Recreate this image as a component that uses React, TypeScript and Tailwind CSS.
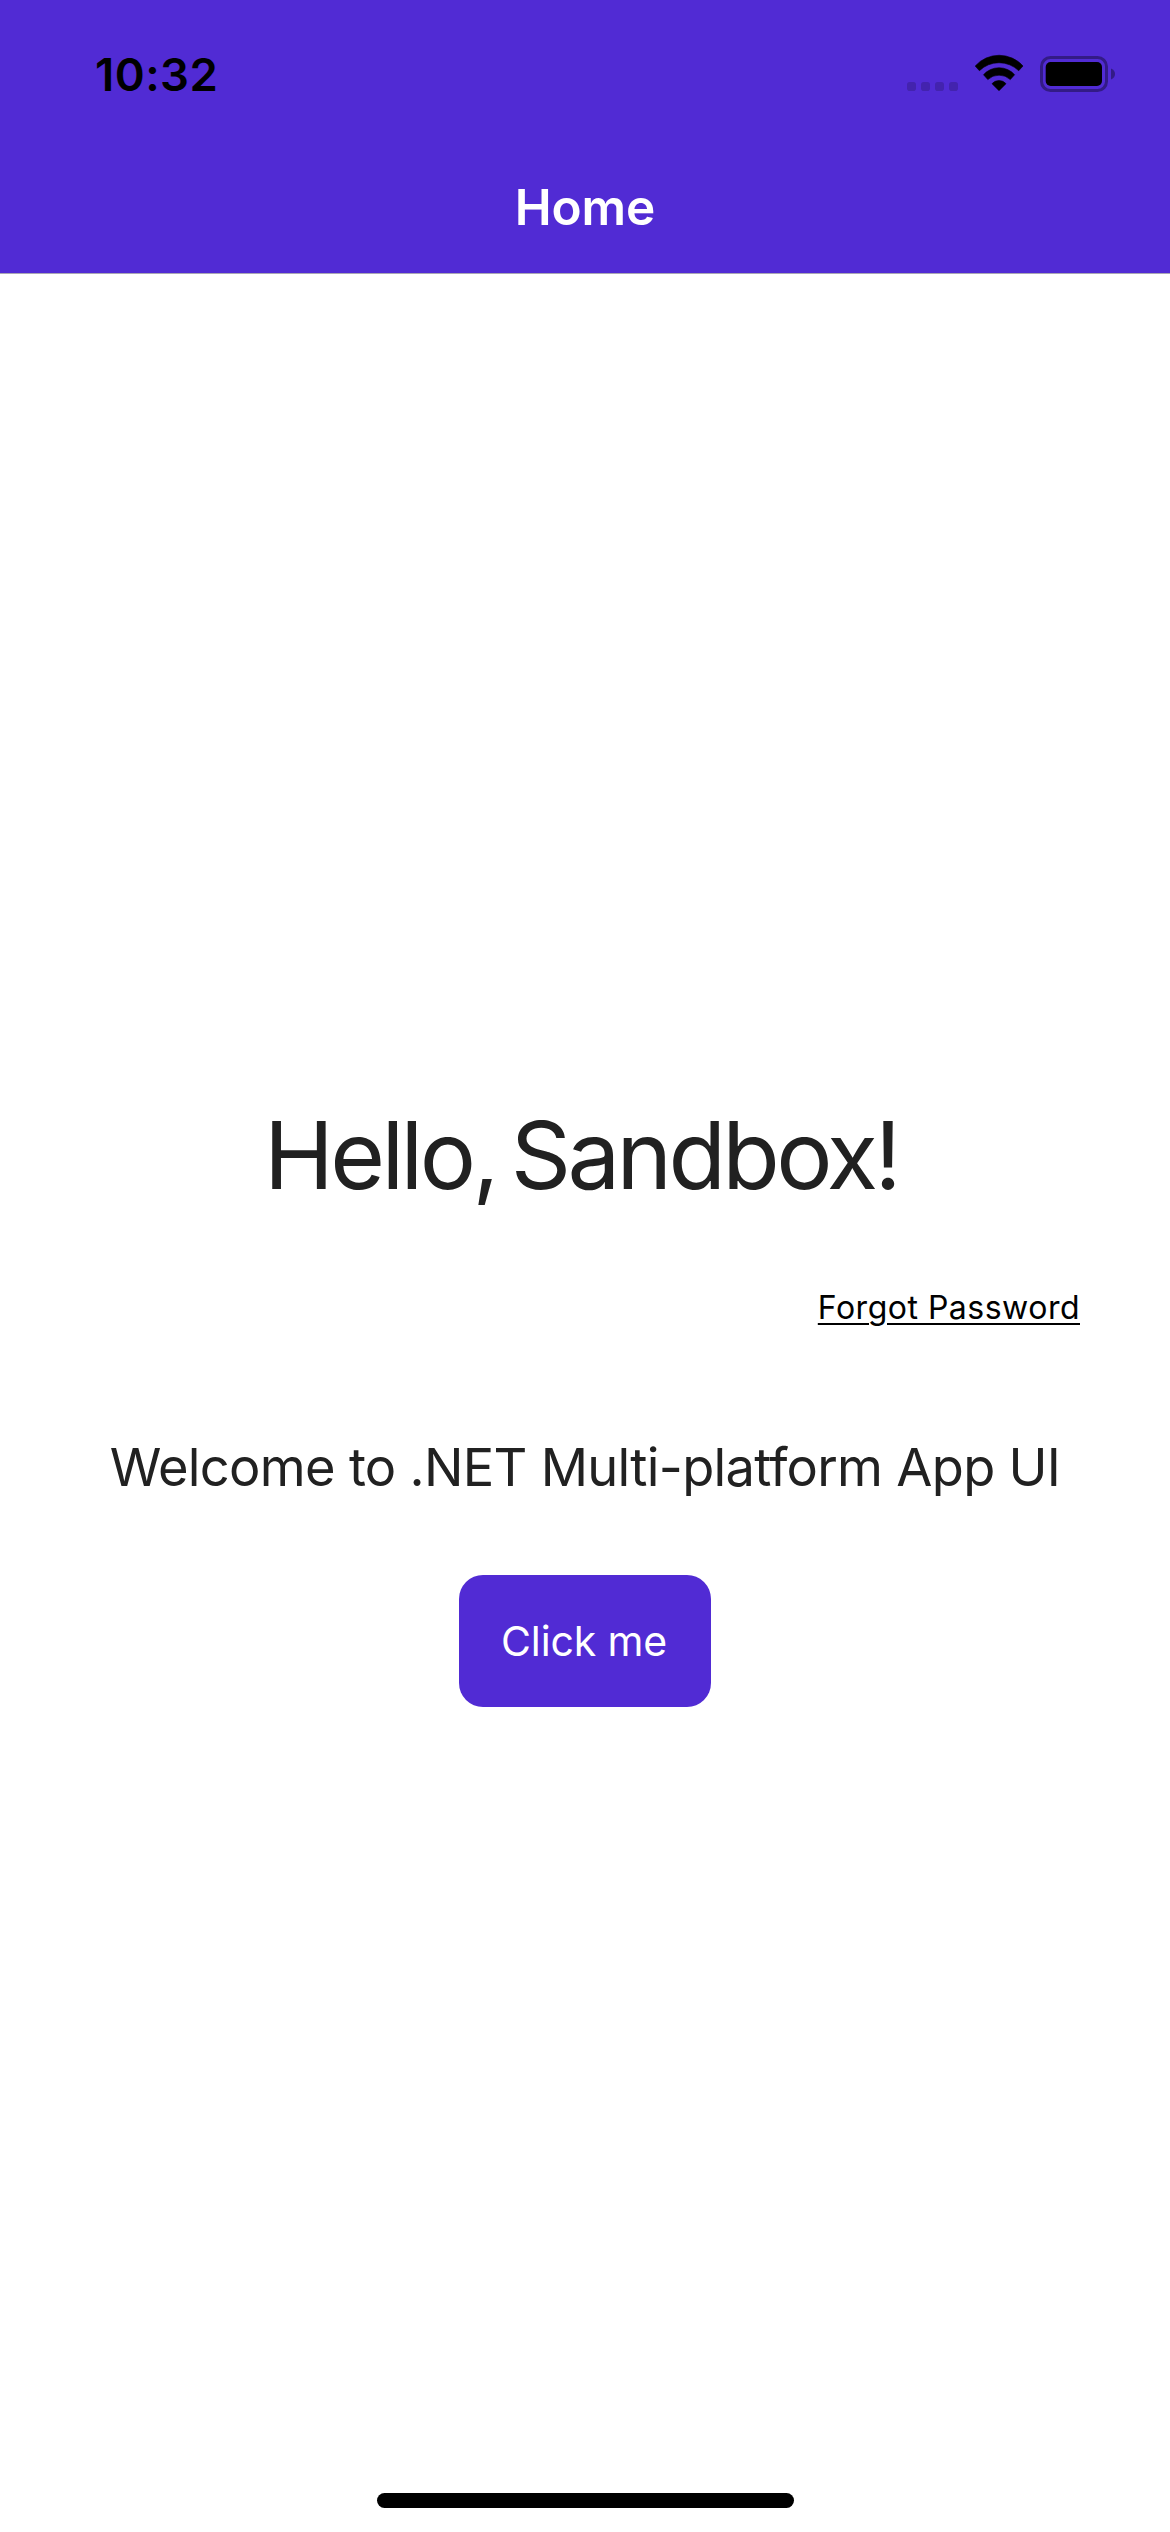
function StatusIcons() {
  return (
    <svg width="210" height="60" viewBox="905 44 210 60">
      <g fill="#4323ae">
        <rect x="907" y="82" width="9" height="9" rx="2.8" />
        <rect x="921" y="82" width="9" height="9" rx="2.8" />
        <rect x="935" y="82" width="9" height="9" rx="2.8" />
        <rect x="949" y="82" width="9" height="9" rx="2.8" />
      </g>
      <g stroke="#000" strokeWidth="0.6" strokeLinejoin="round">
        <path d="M975.2 66A32 32 0 0 1 1023 66L1018.7 70.7A28.2 28.2 0 0 0 979.4 70.7Z" />
        <path d="M983.5 74.7A20.9 20.9 0 0 1 1014.6 74.7L1010.3 79.6A16.4 16.4 0 0 0 987.8 79.6Z" />
        <path d="M992 83.7A9.4 9.4 0 0 1 1006 83.7L999 90.7Z" />
      </g>
      <rect x="1041.5" y="57.5" width="65" height="33" rx="9" fill="none" stroke="#331b86" strokeWidth="3" />
      <rect x="1045.7" y="62" width="56.3" height="24" rx="5" />
      <path d="M1111 68.5Q1115 70.3 1115 74Q1115 77.7 1111 79.5Z" fill="#331b86" />
    </svg>
  );
}

export default function App() {
  return (
    <div className="flex h-[2532px] w-[1170px] flex-col bg-white font-['Inter',sans-serif] text-[#212121]">
      <header className="flex h-[274px] shrink-0 flex-col border-b border-[#a9a6b5] bg-[#512bd4]">
        <div className="flex h-[141px] items-start justify-between pt-[44px] pr-[55px] pl-[95px]">
          <span className="mt-[3px] text-[45.5px] leading-[55px] font-semibold tracking-[0.45px] text-black">10:32</span>
          <StatusIcons />
        </div>
        <h1 className="flex h-[132px] items-center justify-center text-[49.5px] leading-[60px] font-semibold tracking-[-0.1px] text-white">
          Home
        </h1>
      </header>
      <main className="flex flex-1 flex-col items-center">
        <h2 className="mt-[823px] pr-[8px] text-[94px] leading-[116px] tracking-[-3.65px] whitespace-nowrap [word-spacing:-7.9px]">
          Hello, Sandbox!
        </h2>
        <a className="mt-[74px] mr-[90px] self-end text-[32px] leading-[42px] tracking-[0.5px] whitespace-nowrap text-black underline decoration-2 underline-offset-4">
          Forgot Password
        </a>
        <p className="mt-[105px] text-[52.4px] leading-[66px] tracking-[-0.7px] whitespace-nowrap">
          Welcome to .NET Multi-platform App UI
        </p>
        <button className="mt-[75px] h-[132px] w-[252px] rounded-[24px] bg-[#512bd4] pr-[2px] text-[41px] leading-[50px] tracking-[-0.15px] text-white">
          Click me
        </button>
      </main>
      <footer className="flex h-[39px] shrink-0 justify-center">
        <div className="h-[15px] w-[417px] rounded-full bg-black" />
      </footer>
    </div>
  );
}
